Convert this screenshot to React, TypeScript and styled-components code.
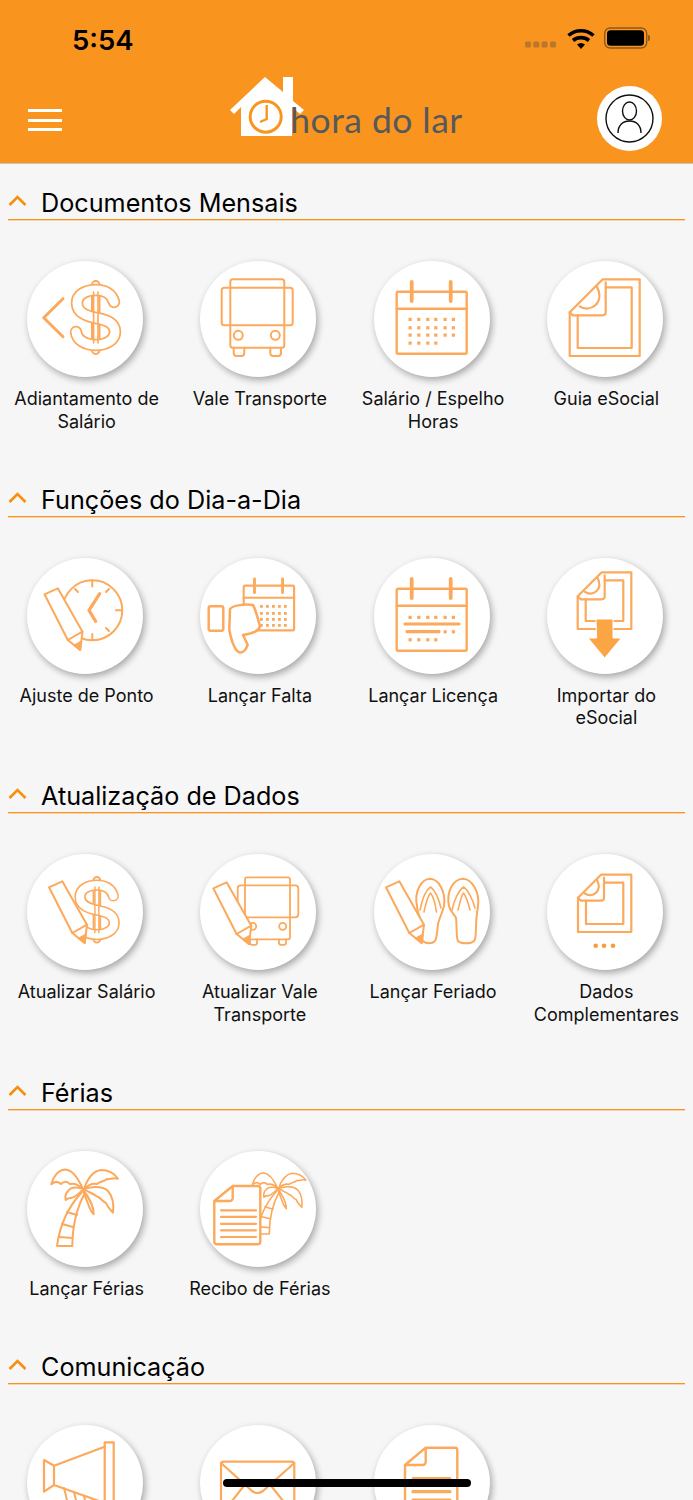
import type { ReactNode } from 'react'
import styled, { createGlobalStyle } from 'styled-components'

const ORANGE = '#f9951f'
const LINE = '#fca95c'

const GlobalStyle = createGlobalStyle`
  html, body {
    margin: 0;
    padding: 0;
    height: 1500px;
    overflow: hidden;
    background: #f6f6f6;
    font-family: Inter, "Liberation Sans", sans-serif;
  }
`

const Page = styled.div`
  position: relative;
  width: 693px;
  height: 1500px;
  overflow: hidden;
`

const Header = styled.header`
  height: 163px;
  background: ${ORANGE};
  border-bottom: 1px solid #c9c3ba;
  display: flex;
  flex-direction: column;
`

const StatusBar = styled.div`
  height: 78px;
  display: flex;
  align-items: center;
  justify-content: space-between;
  padding: 0 43px 0 72px;
`

const Clock = styled.span`
  margin-top: 1px;
  font-size: 27.5px;
  font-weight: 600;
  color: #000;
`

const StatusIcons = styled.div`
  display: flex;
  align-items: center;
`

const NavBar = styled.div`
  flex: 1;
  display: flex;
  align-items: flex-start;
  justify-content: space-between;
  padding: 8px 31px 0 28px;
`

const MenuButton = styled.div`
  margin-top: 23px;
  width: 34px;
  display: flex;
  flex-direction: column;
  gap: 6.5px;

  span {
    display: block;
    height: 3px;
    background: #fff;
  }
`

const Logo = styled.div`
  display: flex;
  align-items: flex-end;
  margin: -9px 0 0 34px;
  height: 60px;
`

const LogoName = styled.span`
  font-family: Lato, "Open Sans", sans-serif;
  font-size: 35.5px;
  font-weight: 400;
  line-height: 36px;
  letter-spacing: 0.45px;
  color: #55595c;
  margin-left: -14px;
  margin-bottom: -1px;
`

const Avatar = styled.div`
  width: 65px;
  height: 65px;
  border-radius: 50%;
  background: #fff;
  display: flex;
  align-items: center;
  justify-content: center;
`

const Content = styled.main`
  padding-top: 25px;
`

const Section = styled.section`
  margin-bottom: 52.5px;
`

const SectionHeader = styled.div`
  margin: 0 8px;
  height: 30px;
  border-bottom: 1px solid ${ORANGE};
  box-shadow: 0 1px 0 rgba(249, 149, 31, 0.35);
  display: flex;
  align-items: center;
  gap: 14px;
`

const SectionTitle = styled.h2`
  margin: 0;
  padding-bottom: 2px;
  font-size: 25.2px;
  font-weight: 400;
  line-height: 30px;
  color: #000;
`

const Grid = styled.div`
  display: grid;
  grid-template-columns: repeat(4, 173.25px);
  padding-top: 41px;
`

const Tile = styled.div`
  display: flex;
  flex-direction: column;
  align-items: center;
`

const Bubble = styled.div`
  width: 116px;
  height: 116px;
  margin-right: 3px;
  border-radius: 50%;
  background: #fff;
  box-shadow: 2px 3px 7px rgba(0, 0, 0, 0.33);
`

const Glyph = styled.svg`
  display: block;
  fill: none;
  stroke: ${LINE};
  stroke-width: 2;
  stroke-linejoin: round;
  stroke-linecap: round;
`

const TileLabel = styled.div`
  margin-top: 11px;
  width: 150px;
  text-align: center;
  font-size: 18px;
  line-height: 22.5px;
  color: #111;
`

const HomeIndicator = styled.div`
  position: absolute;
  left: 223px;
  top: 1479px;
  width: 248px;
  height: 8px;
  border-radius: 4px;
  background: #000;
`

const Chevron = () => (
  <svg width="19" height="12" viewBox="0 0 19 12" fill="none" style={{ marginTop: -6 }}>
    <path d="M1.5 10 9.5 2l8 8" stroke="#f98e0c" strokeWidth="2.6" />
  </svg>
)

const S_CURVE = 'M87 41C85 33 78 29 69 29 58 29 50 34 50 42c0 10 10 13 19 15 11 2 19 5 19 14 0 8-9 13-19 13-11 0-19-5-20-13'

// dollar sign: stem, then the S as a wide stroke hollowed out by a white one
const Dollar = () => (
  <g>
    <rect x="65" y="20" width="7.5" height="73" rx="3.7" fill="#fff" />
    <path d={S_CURVE} strokeWidth="12.500" />
    <path d={S_CURVE} stroke="#fff" strokeWidth="9" />
    <path d="M66.600 31v51M71 31v51" strokeWidth="1.600" />
  </g>
)

const Pencil = ({ dx = 0 }: { dx?: number }) => (
  <g transform={`translate(${dx} 0)`}>
    <path d="M22 33.300 35.300 27.300 60 70.700 57.700 89 45.300 79Z" fill="#fff" />
    <path d="M45.300 79 60 70.700" />
    <path d="M52 84.500 57.700 89 58.500 81Z" fill={LINE} />
  </g>
)

const Bus = () => (
  <g>
    <rect x="30.300" y="18.300" width="54" height="68.400" rx="2.500" />
    <rect x="21.700" y="26.700" width="71" height="37.600" rx="2.500" />
    <circle cx="38.300" cy="74.300" r="4.500" />
    <circle cx="75.300" cy="74.300" r="4.500" />
    <path d="M33.700 86.700V92a3 3 0 0 0 3 3h4.600a3 3 0 0 0 3-3v-5.300M70.300 86.700V92a3 3 0 0 0 3 3H78a3 3 0 0 0 3-3v-5.300" />
  </g>
)

const dotColumns = [36, 44.7, 53.7, 61.7, 71, 79.3]

const DotRow = ({ y, count = 6, from = 0 }: { y: number; count?: number; from?: number }) => (
  <g fill={LINE} stroke="none">
    {dotColumns.slice(from, from + count).map((x) => (
      <rect key={x} x={x - 1.500} y={y - 1.500} width="3.200" height="3.200" />
    ))}
  </g>
)

const CalendarFrame = () => (
  <g strokeWidth="2.400">
    <rect x="22.700" y="30.700" width="70" height="62" rx="1.500" />
    <path d="M22.700 47.700h70" />
    <path d="M37.700 21v19M76.700 21v19" strokeWidth="3.800" />
  </g>
)

type DocProps = { bottom?: number; left?: number; right?: number; top?: number; fold?: number }

// sheet with a curled corner and a second outline just inside it
const Doc = ({ bottom = 95, left = 22.7, right = 92.7, top = 18.3, fold = 33 }: DocProps) => {
  const k = fold / 33
  return (
    <g strokeWidth="2.200">
      <path d={`M${left + fold} ${top}H${right}V${bottom}H${left}V${top + fold}Z`} />
      <path d={`M${left + fold + 3} ${top + 8}H${right - 8}V${bottom - 8}H${left + 8}V${top + fold + 3}`} />
      <path d={`M${left} ${top + fold}l3 3H${left + fold}q3 0 3-3V${top + 3}`} />
      <path d={`M${left + 10 * k} ${top + 27 * k}C${left + 20 * k} ${top + 34 * k} ${left + 36 * k} ${top + 24 * k} ${left + 27 * k} ${top + 7 * k}`} />
    </g>
  )
}

const Palm = () => (
  <g>
    <path d="M55 41C42 55 33 72 30 95H45.300C45.500 75 49 58 58 42" fill="#fff" />
    <path d="M32 86 45.500 87M35 73 46 76M40 61 50 64" />
    <path d="M56 38C50 25 45 19 38 18.500 31 19 26 26 24.300 33.300 29 29 32 31 34 33 37 30 40 30 43 33 47 32 52 34 56 38Z" fill="#fff" />
    <path d="M57 38C61 26 66 20 74 19 81 19 87 22 91 27.700 86 26 83 29 80 28 77 31 73 30 70 33 66 32 61 34 57 38Z" fill="#fff" />
    <path d="M57 38C66 35 76 35 81 40 86 46 87 54 86 61.700 83 58 81 57 79 52 76 51 74 47 71 46 67 43 61 41 57 38Z" fill="#fff" />
    <path d="M56 38C60 45 67 53 66.700 63.300 63 60 62 55 60 50 58 46 57 42 56 38Z" fill="#fff" />
    <path d="M56 38C50 36 44 36 41 40 38 43 38 46 38.700 49 42 46 44 48 47 46 50 44 54 41 56 38Z" fill="#fff" />
  </g>
)

const icons: Record<string, ReactNode> = {
  advance: (
    <>
      <path d="M36 37.700 16.700 56.700 36 75.700" strokeWidth="3" />
      <Dollar />
    </>
  ),
  bus: <Bus />,
  payslip: (
    <>
      <CalendarFrame />
      <DotRow y={58.300} />
      <DotRow y={66.700} />
      <DotRow y={74} />
      <DotRow y={82} count={4} />
    </>
  ),
  esocial: <Doc />,
  timeAdjust: (
    <>
      <circle cx="65.300" cy="52.300" r="30" />
      <path d="M65.300 22.500v6M65.300 76v6M89 52.300h6M82 31l-3 3M82 73l-3-3M48 31l3 3" />
      <path d="M72.700 35.700 62 52.300 68.700 63.300" strokeWidth="3.200" />
      <g transform="translate(-4.500 3)">
        <Pencil />
      </g>
    </>
  ),
  absence: (
    <>
      <g transform="translate(43.700 21) scale(0.72)">
        <rect x="0" y="9.300" width="70" height="62" rx="2" strokeWidth="3" />
        <path d="M0 26h70" strokeWidth="3" />
        <path d="M15 0v19M54 0v19" strokeWidth="4" />
      </g>
      <g fill={LINE} stroke="none">
        {[47, 54, 60, 66].map((y) =>
          [60, 66, 72, 78, 84].map((x) => <rect key={`${x}-${y}`} x={x} y={y} width="2.800" height="2.800" />),
        )}
      </g>
      <rect x="8.700" y="48.300" width="14.600" height="24.400" rx="2" strokeWidth="2.500" />
      <path d="M30 51C33 47 45 46 53 47 56 52 58 62 60 68 59 73 54 75 43 77L47.700 86.700C46 93 42 95 39.300 94.300 35 93 34 87 32.700 85 31 80 30 76 29.300 71.700Z" fill="#fff" strokeWidth="2.500" />
    </>
  ),
  leave: (
    <>
      <CalendarFrame />
      <DotRow y={59.300} />
      <path d="M31 66h54" strokeWidth="3.200" />
      <path d="M33 73.700h32" strokeWidth="3.200" />
      <DotRow y={73.700} count={2} from={4} />
      <DotRow y={81.700} count={4} />
    </>
  ),
  importEsocial: (
    <>
      <Doc left={30.700} right={84.300} top={14.300} bottom={71} fold={24} />
      <path d="M49.300 61H66V80H74.300L57.700 100 41 80H49.300Z" fill="#fba544" stroke="#fff" strokeWidth="1" />
    </>
  ),
  updateSalary: (
    <>
      <g transform="translate(8 5) scale(0.9)">
        <Dollar />
      </g>
      <Pencil />
    </>
  ),
  updateBus: (
    <>
      <g strokeWidth="1.800">
        <rect x="45" y="23.300" width="45" height="62" rx="2" />
        <rect x="37.700" y="31.300" width="60.600" height="32" rx="3" />
        <circle cx="52.700" cy="72.300" r="3.500" />
        <circle cx="82.700" cy="72.300" r="3.500" />
        <path d="M79 85.300v3.500a2 2 0 0 0 2 2h3a2 2 0 0 0 2-2v-3.500M50 85.300v3.500a2 2 0 0 0 2 2h3a2 2 0 0 0 2-2v-3.500" />
      </g>
      <g transform="translate(-8.700 1)">
        <Pencil />
      </g>
    </>
  ),
  holiday: (
    <>
      <path d="M43 52C40 38 47 25 56 24.700 65 25 72 38 70 52 68 60 66 62 64 70 63 78 63 84 61 87 58 90 52 90 49 87 47 84 47 70 46 65 45 60 43 57 43 52Z" />
      <path d="M46 56C48 46 52 36 56.500 33 61 36 65 46 67 54M50 58C52 48 54 42 56.500 39 59 42 61 48 62.500 58" strokeWidth="1.600" />
      <path d="M75 52C72 38 79 25 89 24.700 98 25 106 38 104 52 103 60 102 64 102 72 102 80 102 85 100 87 97 90 87 90 84 87 82 84 83 70 82 64 80 60 76 57 75 52Z" />
      <path d="M78 56C80 46 85 36 89.500 33 94 36 99 46 101 54M84 56C86 48 87 42 89.500 39 92 42 94 48 96 56" strokeWidth="1.600" />
      <g transform="translate(-10 0)">
        <Pencil />
      </g>
    </>
  ),
  extraData: (
    <>
      <Doc left={31} right={84.300} top={20.700} bottom={78} fold={23} />
      <g fill="#fb9c3c" stroke="none">
        <circle cx="48.700" cy="91.700" r="2.300" />
        <circle cx="57" cy="91.700" r="2.300" />
        <circle cx="66" cy="91.700" r="2.300" />
      </g>
    </>
  ),
  vacation: <Palm />,
  vacationReceipt: (
    <>
      <g transform="translate(33 7) scale(0.8)">
        <Palm />
      </g>
      <path d="M32.700 35H58A2.500 2.500 0 0 1 60.300 37.500V91A2.500 2.500 0 0 1 58 93.300H16.500A2.500 2.500 0 0 1 14.300 91V50ZM32.700 35V47A3 3 0 0 1 29.700 50H14.300" fill="#fff" strokeWidth="2.400" />
      <path d="M21 59.300H56M21 65.800H56M21 72.800H56M21 79.300H56M21 86H56" strokeWidth="2.200" />
    </>
  ),
  megaphone: (
    <>
      <rect x="77.700" y="17.300" width="9" height="90" strokeWidth="2.200" />
      <path d="M77.700 21.700 27 40.700V60L77.700 78M17 35 27 40.700V60L17 66.700Z" strokeWidth="2.200" />
      <path d="M37 63l5 20M47 67l5 20M57 71l5 20" />
    </>
  ),
  mail: (
    <g strokeWidth="2.200">
      <rect x="21" y="36.700" width="73.300" height="60" rx="3" />
      <path d="M21 38 52 66q5.500 4 11 0L94.300 38M21 90 43 62M94.300 90 72 62" />
    </g>
  ),
  document: (
    <g strokeWidth="2.400">
      <path d="M51.700 22.700H81a2.500 2.500 0 0 1 2.300 2.500V112H31V40ZM51.700 22.700V37a3 3 0 0 1-3 3H31" />
      <path d="M39 53.300H76" />
      <path d="M39 66.700H76M39 75H76" strokeWidth="3.200" />
    </g>
  ),
}

type TileData = { icon: string; label?: string }

// the last section runs off the bottom of the screen, so its tiles show no caption
const sections: { title: string; tiles: TileData[] }[] = [
  {
    title: 'Documentos Mensais',
    tiles: [
      { icon: 'advance', label: 'Adiantamento de Salário' },
      { icon: 'bus', label: 'Vale Transporte' },
      { icon: 'payslip', label: 'Salário / Espelho Horas' },
      { icon: 'esocial', label: 'Guia eSocial' },
    ],
  },
  {
    title: 'Funções do Dia-a-Dia',
    tiles: [
      { icon: 'timeAdjust', label: 'Ajuste de Ponto' },
      { icon: 'absence', label: 'Lançar Falta' },
      { icon: 'leave', label: 'Lançar Licença' },
      { icon: 'importEsocial', label: 'Importar do eSocial' },
    ],
  },
  {
    title: 'Atualização de Dados',
    tiles: [
      { icon: 'updateSalary', label: 'Atualizar Salário' },
      { icon: 'updateBus', label: 'Atualizar Vale Transporte' },
      { icon: 'holiday', label: 'Lançar Feriado' },
      { icon: 'extraData', label: 'Dados Complementares' },
    ],
  },
  {
    title: 'Férias',
    tiles: [
      { icon: 'vacation', label: 'Lançar Férias' },
      { icon: 'vacationReceipt', label: 'Recibo de Férias' },
    ],
  },
  {
    title: 'Comunicação',
    tiles: [{ icon: 'megaphone' }, { icon: 'mail' }, { icon: 'document' }],
  },
]

export default function App() {
  return (
    <Page>
      <GlobalStyle />
      <Header>
        <StatusBar>
          <Clock>5:54</Clock>
          <StatusIcons>
            <svg width="125" height="24" viewBox="0 0 125 24">
              <g fill="#b8772c">
                <rect x="0" y="14.500" width="6" height="6" rx="1.500" />
                <rect x="8.300" y="14.500" width="6" height="6" rx="1.500" />
                <rect x="16.600" y="14.500" width="6" height="6" rx="1.500" />
                <rect x="25" y="14.500" width="6" height="6" rx="1.500" />
              </g>
              <g fill="none" stroke="#000" strokeWidth="3.600">
                <path d="M43.500 8.500a19 19 0 0 1 25 0" />
                <path d="M48 13.500a12.500 12.500 0 0 1 16 0" />
              </g>
              <path d="M52 17.500a6.500 6.500 0 0 1 8 0L56 22Z" fill="#000" />
              <rect x="79.700" y="1" width="42" height="20" rx="5.500" fill="none" stroke="#8a5a20" strokeWidth="1.400" />
              <rect x="82" y="3.200" width="37" height="15.600" rx="3.500" fill="#000" />
              <rect x="123" y="8" width="1.800" height="6" rx="0.900" fill="#8a5a20" />
            </svg>
          </StatusIcons>
        </StatusBar>
        <NavBar>
          <MenuButton>
            <span />
            <span />
            <span />
          </MenuButton>
          <Logo>
            <svg width="74" height="60" viewBox="0 0 74 60">
              <path d="M35 0 53 15V0H63V24L74 33 70 37 62 30V59H11V30L4 37 0 33Z" fill="#fff" />
              <circle cx="35.700" cy="39.700" r="15.500" fill="none" stroke={ORANGE} strokeWidth="3" />
              <path d="M36.700 28V42L30 45" fill="none" stroke={ORANGE} strokeWidth="2.400" />
            </svg>
            <LogoName>hora do lar</LogoName>
          </Logo>
          <Avatar>
            <svg width="49" height="49" viewBox="0 0 49 49" fill="none" stroke="#111" strokeWidth="1.400">
              <circle cx="24.500" cy="24.500" r="23.500" />
              <ellipse cx="24.500" cy="17" rx="7" ry="9" />
              <path d="M13 39c0-8 5-12 11.500-12S36 31 36 39" />
            </svg>
          </Avatar>
        </NavBar>
      </Header>
      <Content>
        {sections.map((section) => (
          <Section key={section.title}>
            <SectionHeader>
              <Chevron />
              <SectionTitle>{section.title}</SectionTitle>
            </SectionHeader>
            <Grid>
              {section.tiles.map((tile) => (
                <Tile key={tile.icon}>
                  <Bubble>
                    <Glyph width="116" height="116" viewBox="0 0 116 116">
                      {icons[tile.icon]}
                    </Glyph>
                  </Bubble>
                  {tile.label && <TileLabel>{tile.label}</TileLabel>}
                </Tile>
              ))}
            </Grid>
          </Section>
        ))}
      </Content>
      <HomeIndicator />
    </Page>
  )
}
